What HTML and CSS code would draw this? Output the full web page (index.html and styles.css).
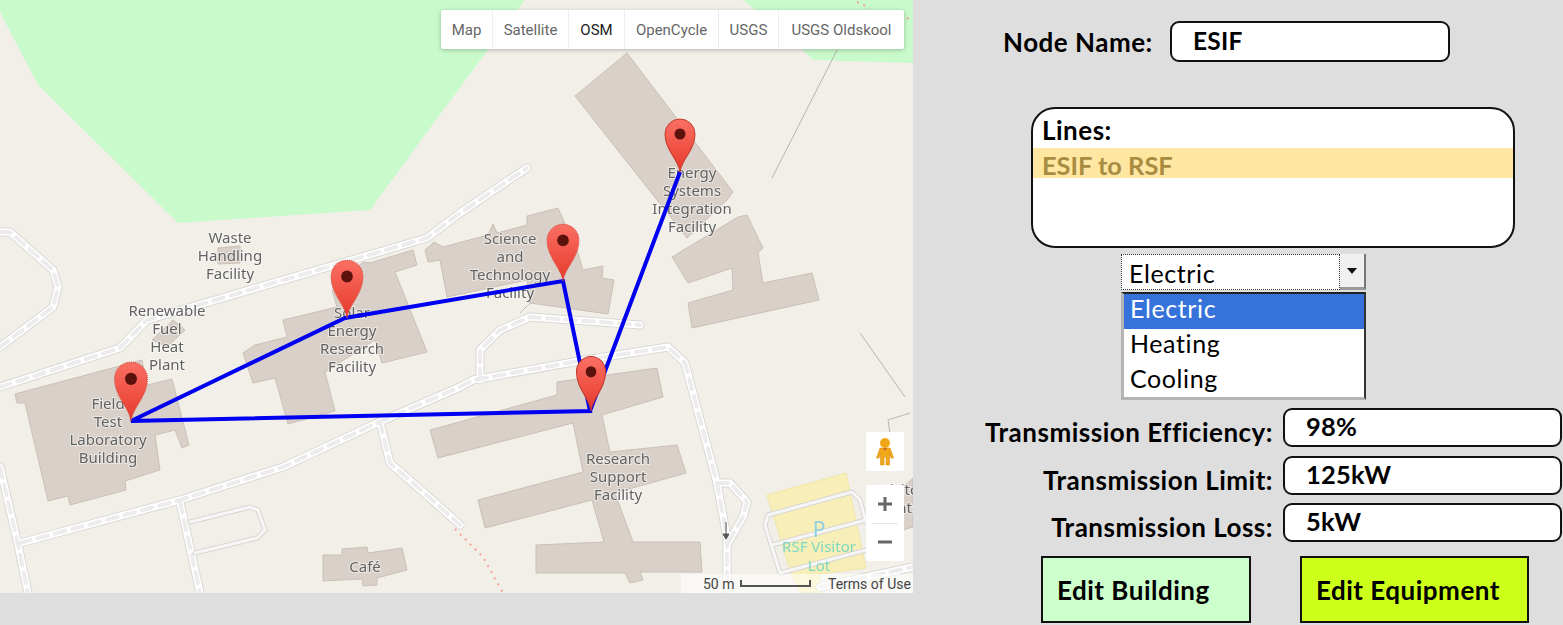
FILE: index.html
```html
<!DOCTYPE html>
<html lang="en">
<head>
<meta charset="utf-8">
<title>Node editor</title>
<link rel="stylesheet" href="styles.css">
</head>
<body>
<main class="page">
  <section class="map">
    <svg class="map-art" width="913" height="593" viewBox="0 0 913 593" xmlns="http://www.w3.org/2000/svg">
      <defs>
        <path id="roads" d="M0 387L120 348L147 320L427 238L460 213L527 168M0 232H10L53 270L58 287L53 307L0 347M20 543L180 500L283 467L377 423L460 387L473 380L573 362L668 347L685 363L717 483L727 537V593M380 422L390 463L430 498L460 525M480 380V350L500 330L530 317L600 322L640 325M717 483H730L747 502L743 517L728 543M0 467L17 540L28 593M180 502L200 593M820 587L913 567"/>
        <path id="lanes" d="M190 522L250 507L258 510L265 530L257 538L195 553M768 515L852 492L860 500L866 522M768 515L765 525L780 573M772 545L866 520M780 573L866 550"/>
        <g id="pin">
          <path d="M0 0C-2-13-15-22-15-38A15 15 0 0 1 15-38C15-22 2-13 0 0Z" fill="url(#pinFill)" stroke-width="1"/>
          <circle cx="0" cy="-38" r="5.500" fill="#5c120c" stroke="none"/>
        </g>
        <linearGradient id="pinFill" x1="0" y1="0" x2="0" y2="1">
          <stop offset="0" stop-color="#fb7064"/>
          <stop offset="1" stop-color="#e5392a"/>
        </linearGradient>
      </defs>
      <g class="base">
        <path class="green" d="M0 0H525L430 128L370 210L178 223L38 85L0 12Z"/>
        <path class="green" d="M743 0H913V63L813 60L803 50Z"/>
        <path class="fine" d="M837 50L772 178M860 333L905 397M910 413L888 420L890 433L900 440"/>
        <path class="yellow" d="M767 495L846 473L866 568L820 574L820 593H800L790 570Z"/>
        <g class="building">
          <path d="M627 53L733 192L727 200L687 238L575 96Z"/>
          <path d="M672 257L700 240L738 217L747 215L763 248L758 253L763 283L812 273L819 300L692 328L688 303L733 290L732 268L688 283Z"/>
          <path d="M425 250L428 262L440 260L447 297L527 280L530 303L520 313L530 303L608 314L614 280L602 278L603 266L583 270L577 250L558 208L527 216L527 225L497 233L493 224L488 235L443 247L434 242Z"/>
          <path d="M332 290L363 262L370 263L413 250L417 265L395 272L427 352L382 363L375 340L325 372L335 411L288 424L275 378L253 383L243 353L255 345L287 337L283 320L337 307Z"/>
          <path d="M15 394L142 360L147 385L172 379L189 445L182 448L175 430L155 435L160 470L125 481L126 490L70 505L68 496L48 501L25 403L17 403Z"/>
          <path d="M430 430L557 395L557 382L657 368L663 397L602 415L610 452L677 445L686 473L615 493L633 542L700 542L702 572L640 572L643 580L630 583L625 573L536 573L536 545L604 542L592 500L485 528L478 500L583 472L573 423L438 458Z"/>
          <path d="M323 555L342 555L342 549L367 547L368 553L402 548L407 570L377 578L377 585L363 586L362 579L323 581Z"/>
          <path d="M218 248L240 246L240 263L218 264Z"/>
          <path d="M173 320L185 330L167 347L152 340Z"/>
          <path d="M903 487L913 478V527L903 530Z"/>
        </g>
        <g class="road-layers">
          <use href="#roads" class="road-edge"/>
          <use href="#roads" class="road-fill"/>
          <use href="#roads" class="road-dash"/>
          <use href="#lanes" class="lane-edge"/>
          <use href="#lanes" class="lane-fill"/>
        </g>
        <path class="trail" d="M455 529L483 557L503 593M857 2L870 8M900 16L910 19"/>
        <path class="arrow" d="M726 522V538M723 534L726 539L729 534Z"/>
        <g class="label">
          <text x="230" y="243">Waste</text><text x="230" y="261">Handling</text><text x="230" y="279">Facility</text>
          <text x="167" y="316">Renewable</text><text x="167" y="334">Fuel</text><text x="167" y="352">Heat</text><text x="167" y="370">Plant</text>
          <text x="108" y="409">Field</text><text x="108" y="427">Test</text><text x="108" y="445">Laboratory</text><text x="108" y="463">Building</text>
          <text x="352" y="318">Solar</text><text x="352" y="336">Energy</text><text x="352" y="354">Research</text><text x="352" y="372">Facility</text>
          <text x="510" y="244">Science</text><text x="510" y="262">and</text><text x="510" y="280">Technology</text><text x="510" y="298">Facility</text>
          <text x="692" y="178">Energy</text><text x="692" y="196">Systems</text><text x="692" y="214">Integration</text><text x="692" y="232">Facility</text>
          <text x="618" y="464">Research</text><text x="618" y="482">Support</text><text x="618" y="500">Facility</text>
          <text x="365" y="572">Café</text>
          <text x="903" y="495">Visitor</text><text x="903" y="513">Center</text>
          <text class="park-letter" x="819" y="537">P</text>
          <text class="park" x="819" y="552">RSF Visitor</text><text class="park" x="819" y="571">Lot</text>
        </g>
      </g>
      <path class="link" d="M131 421L345 318L563 281L590 411L131 421ZM590 411L680 172"/>
      <use href="#pin" class="pin-big" transform="translate(131 421) scale(1.09 1.11)"/>
      <use href="#pin" class="pin-big" transform="translate(347 318) scale(1.06 1.09)"/>
      <use href="#pin" class="pin-big" transform="translate(563 281) scale(1.06 1.07)"/>
      <use href="#pin" class="pin-small" transform="translate(591 411) scale(.97 1.03)"/>
      <use href="#pin" class="pin-small" transform="translate(680 172)"/>
    </svg>

    <nav class="map-types">
      <span class="map-type w-map">Map</span>
      <span class="map-type w-sat">Satellite</span>
      <span class="map-type w-osm is-active">OSM</span>
      <span class="map-type w-cycle">OpenCycle</span>
      <span class="map-type w-usgs">USGS</span>
      <span class="map-type w-old">USGS Oldskool</span>
    </nav>

    <div class="pegman">
      <svg width="18" height="28" viewBox="0 0 18 28" xmlns="http://www.w3.org/2000/svg">
        <circle cx="9" cy="5" r="5" fill="#f0a818"/>
        <path d="M4 10H14L17.500 20H15L13.500 15V27H10V19H8V27H4.500V15L3 20H.5Z" fill="#f0a818" stroke="#d98a10" stroke-width=".6"/>
        <path d="M7 10L9 13L11 10Z" fill="#d8652b"/>
      </svg>
    </div>
    <div class="zoom-box">
      <span class="zoom-btn">
        <svg width="16" height="16" viewBox="0 0 16 16" xmlns="http://www.w3.org/2000/svg"><path d="M6.500 1H9.500V6.500H15V9.500H9.500V15H6.500V9.500H1V6.500H6.500Z" fill="#666"/></svg>
      </span>
      <span class="zoom-line"></span>
      <span class="zoom-btn">
        <svg width="16" height="16" viewBox="0 0 16 16" xmlns="http://www.w3.org/2000/svg"><path d="M1 6.500H15V9.500H1Z" fill="#666"/></svg>
      </span>
    </div>
    <div class="map-foot">
      <span class="foot-scale-label">50 m</span>
      <span class="scale"></span>
      <span class="terms">Terms of Use</span>
    </div>
  </section>

  <section class="panel">
    <div class="name-row">
      <span class="strong-text name-label">Node Name:</span>
      <div class="field name-field">ESIF</div>
    </div>

    <div class="lines">
      <div class="lines-title">Lines:</div>
      <div class="lines-item">ESIF to RSF</div>
    </div>

    <div class="combo">
      <div class="combo-head">
        <span class="combo-value">Electric</span>
        <span class="combo-arrow"><span class="caret"></span></span>
      </div>
      <ul class="combo-list">
        <li class="combo-option is-selected">Electric</li>
        <li class="combo-option">Heating</li>
        <li class="combo-option">Cooling</li>
      </ul>
    </div>

    <div class="stats">
      <span class="strong-text stat-label">Transmission Efficiency:</span>
      <div class="field stat-field">98%</div>
      <span class="strong-text stat-label">Transmission Limit:</span>
      <div class="field stat-field tall">125kW</div>
      <span class="strong-text stat-label">Transmission Loss:</span>
      <div class="field stat-field">5kW</div>
    </div>

    <div class="actions">
      <button class="action building" type="button">Edit Building</button>
      <button class="action equipment" type="button">Edit Equipment</button>
    </div>
  </section>
</main>
</body>
</html>
```
FILE: styles.css
```css
* { box-sizing: border-box; }
html, body { margin: 0; height: 100%; }
body { background: #dedede; overflow: hidden; font-family: "Lato", "Liberation Sans", sans-serif; color: #000; }
.page { display: flex; width: 1563px; height: 625px; }

/* Map */
.map { position: relative; flex: none; width: 913px; height: 593px; background: #f2efe9; overflow: hidden; font-family: "Roboto", "Liberation Sans", sans-serif; }
.map-art { display: block; }
.base { filter: blur(.6px); }
.green { fill: #c8facc; }
.yellow { fill: #f7efb7; stroke: #f0e6a8; }
.building path { fill: #d9d0c9; stroke: #c9bfb6; stroke-width: 1; }
.fine { fill: none; stroke: #b5b5ad; stroke-width: 1; }
.road-layers use { fill: none; stroke-linejoin: round; stroke-linecap: round; }
.road-edge { stroke: #dad8d3; stroke-width: 9; }
.road-fill { stroke: #fff; stroke-width: 7; }
.road-dash { stroke: #ececec; stroke-width: 4; stroke-dasharray: 11 7; }
.lane-edge { stroke: #d8d6d1; stroke-width: 5; }
.lane-fill { stroke: #f6f6f6; stroke-width: 3; }
.trail { fill: none; stroke: #f6a096; stroke-width: 2; stroke-dasharray: 2 5; }
.arrow { fill: #555; stroke: #555; stroke-width: 1; }
.label text { font-family: "Noto Sans", "Open Sans", sans-serif; font-size: 15px; fill: #626262; text-anchor: middle; paint-order: stroke; stroke: rgba(255,255,255,.5); stroke-width: 2px; }
.label .park { fill: #7fd8c0; font-size: 15px; stroke: none; }
.label .park-letter { fill: #8fd0e0; font-size: 21px; stroke: none; }
.link { fill: none; stroke: #0000f0; stroke-width: 4; stroke-linejoin: miter; }
.pin-big { stroke: #dc4a3c; stroke-dasharray: 1 .8; }
.pin-small { stroke: #c0392d; }

.map-types { position: absolute; left: 441px; top: 10px; display: flex; height: 39px; background: #fff; border-radius: 2px; box-shadow: 0 1px 4px rgba(0,0,0,.25); font-size: 15px; color: #666; }
.map-type { display: flex; align-items: center; justify-content: center; border-right: 1px solid #eee; }
.map-type:last-child { border-right: 0; }
.is-active { color: #222; }
.w-map { width: 52px; }
.w-sat { width: 76px; }
.w-osm { width: 56px; }
.w-cycle { width: 94px; }
.w-usgs { width: 60px; }
.w-old { width: 125px; }

.pegman { position: absolute; left: 866px; top: 432px; width: 38px; height: 39px; display: flex; align-items: center; justify-content: center; background: #fff; border-radius: 2px; }
.zoom-box { position: absolute; left: 866px; top: 485px; width: 38px; height: 76px; display: flex; flex-direction: column; align-items: center; background: #fff; border-radius: 2px; }
.zoom-btn { flex: 1; display: flex; align-items: center; justify-content: center; }
.zoom-line { flex: none; width: 26px; height: 1px; background: #e6e6e6; }
.map-foot { position: absolute; right: 0; bottom: 0; width: 232px; height: 19px; display: flex; align-items: center; padding-left: 22px; background: rgba(255,255,255,.55); font-size: 14px; color: #444; }
.foot-scale-label { flex: none; width: 37px; white-space: nowrap; }
.scale { flex: none; width: 71px; height: 7px; border: 2px solid #555; border-top: 0; }
.terms { margin-left: 17px; white-space: nowrap; }

/* Panel */
.panel { flex: none; width: 650px; display: flex; flex-direction: column; padding-top: 21px; }
.strong-text { font-weight: 700; font-size: 26px; line-height: 1; letter-spacing: .5px; white-space: nowrap; }
.field { background: #fff; border: 2px solid #111; border-radius: 9px; font-weight: 700; font-size: 25.500px; letter-spacing: .2px; }
.name-row { display: flex; align-items: center; margin-left: 90px; }
.name-label { flex: none; width: 167px; }
.name-field { width: 280px; height: 41px; padding: 0 0 6px 21px; line-height: 35px; font-size: 24.500px; }

.lines { width: 484px; height: 141px; margin: 45px 0 0 118px; background: #fff; border: 2px solid #111; border-radius: 24px; font-weight: 700; overflow: hidden; }
.lines-title { height: 39px; padding-left: 9px; line-height: 43px; font-size: 26px; letter-spacing: .5px; }
.lines-item { height: 30px; padding-left: 9px; line-height: 35px; font-size: 25.400px; background: #ffe6a1; color: #a88c42; }

.combo { width: 245px; margin: 6px 0 0 208px; font-size: 25px; letter-spacing: .6px; }
.combo-head { display: flex; height: 36px; }
.combo-value { flex: 1; padding-left: 7px; line-height: 36px; background: #fff; border: 1px dotted #333; }
.combo-arrow { flex: none; width: 26px; display: flex; align-items: center; justify-content: center; background: #f0f0f0; border-right: 2px solid #777; border-bottom: 3px solid #999; }
.caret { width: 0; height: 0; border: 5px solid transparent; border-top: 6px solid #111; border-bottom: 0; }
.combo-list { list-style: none; margin: 2px 0 0; padding: 0; height: 108px; background: #fff; border: 3px solid #b4b4b4; border-top: 2px solid #222; border-right: 2px solid #333; }
.combo-option { height: 35px; padding-left: 6px; line-height: 29px; }
.is-selected { background: #3572d9; color: #fff; }

.stats { display: grid; grid-template-columns: 360px 279px; column-gap: 10px; row-gap: 8px; margin-top: 8px; align-items: center; }
.stat-label { text-align: right; padding-top: 9px; }
.stat-field { height: 39px; padding-left: 21px; line-height: 33px; }
.tall { margin-top: 1px; height: 39px; }

.actions { display: flex; margin: 14px 0 0 128px; gap: 49px; }
.action { height: 67px; padding: 0 0 0 14px; border: 2px solid #111; border-radius: 0; font: 700 26px "Lato", "Liberation Sans", sans-serif; letter-spacing: .5px; color: #000; text-align: left; }
.building { width: 210px; background: #ccffcc; }
.equipment { width: 229px; background: #ccff1a; }
```
